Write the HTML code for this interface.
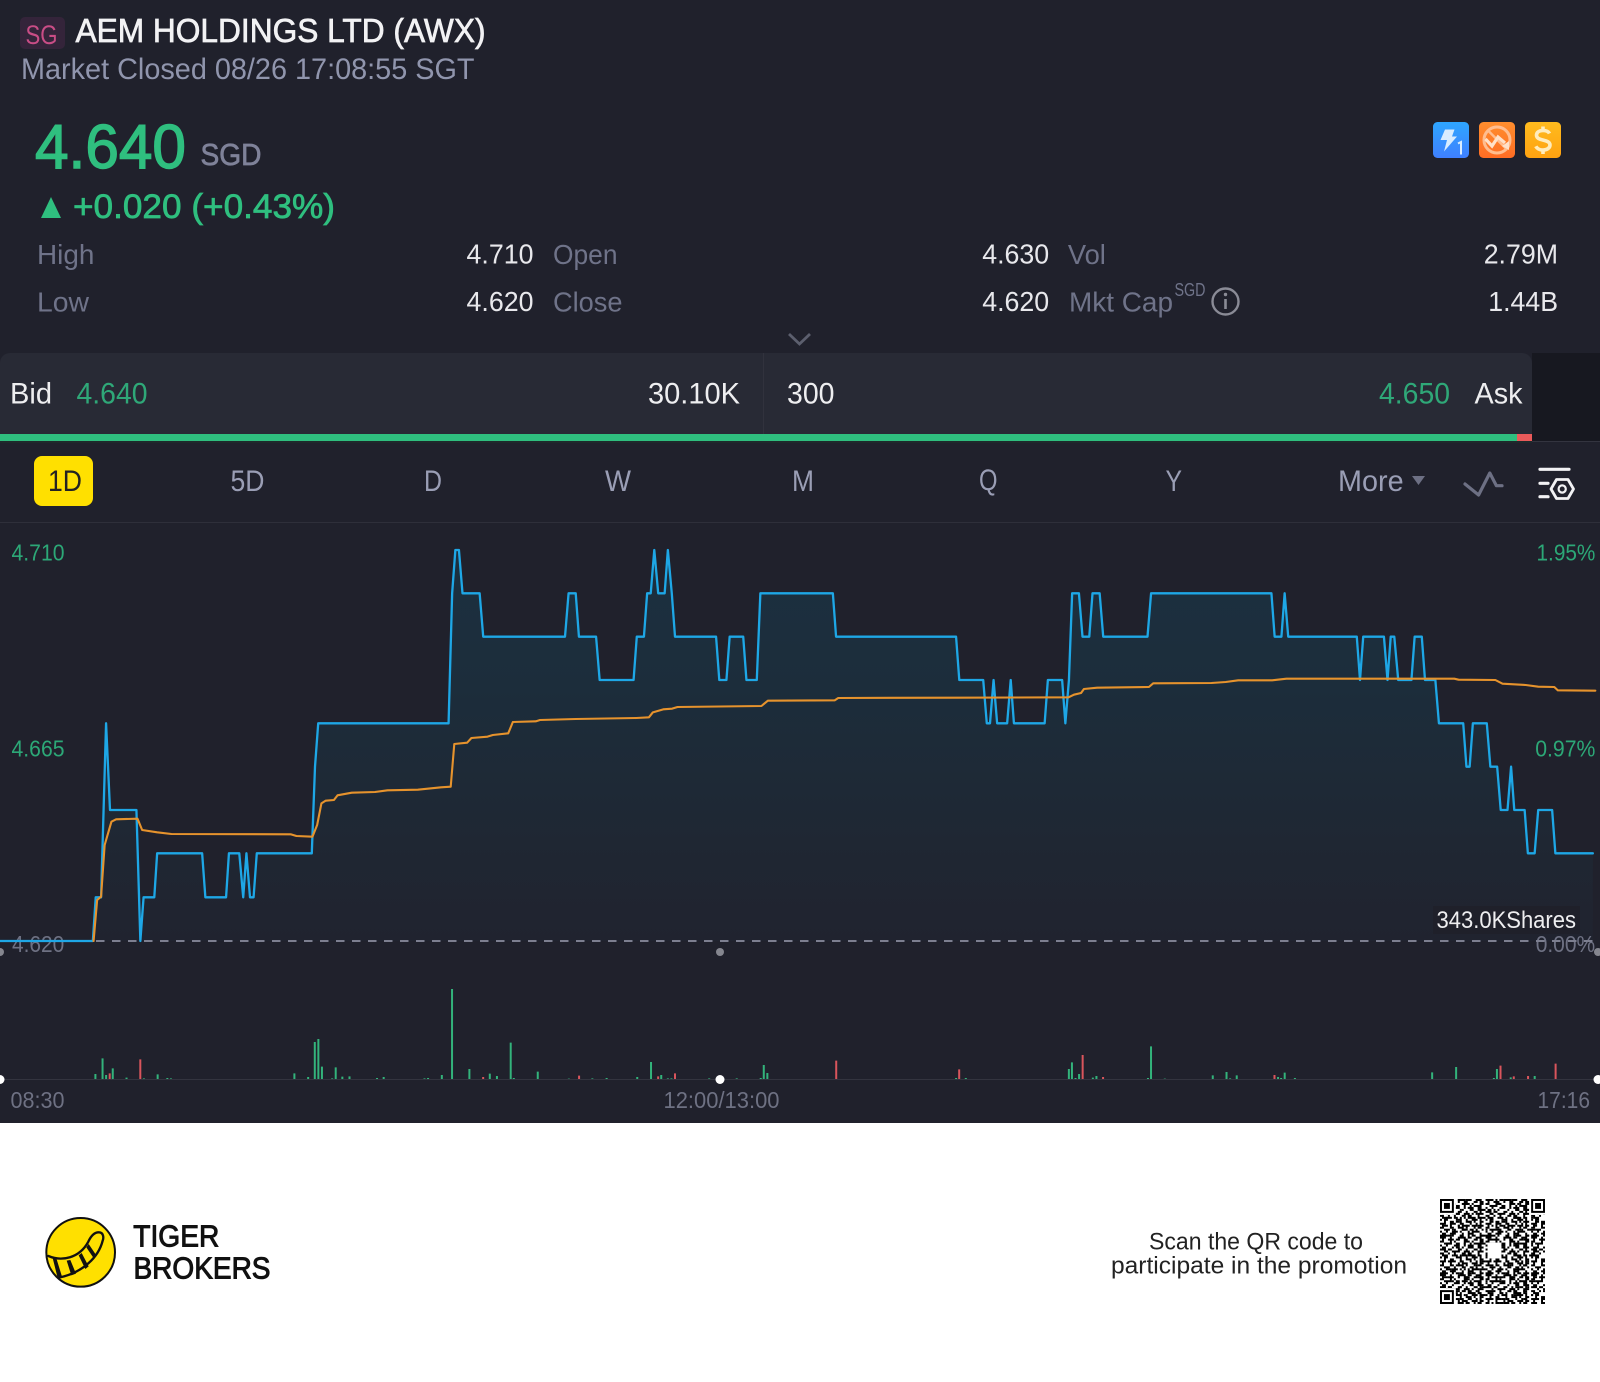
<!DOCTYPE html>
<html><head><meta charset="utf-8"><title>AEM HOLDINGS LTD (AWX)</title>
<style>
html,body{margin:0;padding:0;background:#fff;width:1600px;height:1382px;overflow:hidden}
svg{display:block}
text{font-family:"Liberation Sans",sans-serif;white-space:pre}
.lab{font-size:28px;fill:#6f7389}
.val{font-size:28px;fill:#e8e8ec}
.bid{font-size:30px;fill:#eeeef0}
.bg{font-size:30px;fill:#2fa878}
.tab{font-size:30px;fill:#9a9eb5}
.ax{font-size:23.5px;fill:#6e7183}
.axg{font-size:23.5px;fill:#2ca877}
.ln{vector-effect:non-scaling-stroke;fill:none;stroke-linejoin:round;stroke-linecap:round}
.bar{vector-effect:non-scaling-stroke;fill:none;stroke-width:2}
</style></head><body>
<svg width="1600" height="1382" viewBox="0 0 1600 1382" xmlns="http://www.w3.org/2000/svg">
<defs>
<linearGradient id="af" x1="0" y1="0" x2="0" y2="1"><stop offset="0" stop-color="#1b3040"/><stop offset=".35" stop-color="#1c2d3b"/><stop offset=".75" stop-color="#1f2733"/><stop offset="1" stop-color="#20232f"/></linearGradient>
<linearGradient id="b1" x1="0" y1="0" x2="0" y2="1"><stop offset="0" stop-color="#2ea6ff"/><stop offset="1" stop-color="#3f80ff"/></linearGradient>
<linearGradient id="b2" x1="0" y1="0" x2="0" y2="1"><stop offset="0" stop-color="#ff8e2e"/><stop offset="1" stop-color="#ff6d24"/></linearGradient>
<linearGradient id="b3" x1="0" y1="0" x2="0" y2="1"><stop offset="0" stop-color="#ffbb1e"/><stop offset="1" stop-color="#ffa211"/></linearGradient>
<pattern id="qr1" patternUnits="userSpaceOnUse" width="23" height="19">
<path fill="none" stroke="#000" stroke-width="1" d="M0 .5h3m2 0h1m3 0h4m1 0h2m2 0h3M1 1.5h1m2 0h3m2 0h1m2 0h2m3 0h2m1 0h2M0 2.5h2m3 0h1m1 0h1m4 0h3m1 0h1m3 0h2M2 3.5h4m2 0h2m2 0h1m2 0h1m1 0h4M0 4.5h1m2 0h1m3 0h3m2 0h1m1 0h3m2 0h2M1 5.5h2m3 0h1m4 0h1m3 0h2m2 0h3M0 6.5h3m1 0h2m3 0h2m2 0h1m3 0h2m1 0h1M3 7.5h1m2 0h4m2 0h3m1 0h1m2 0h3M0 8.5h2m2 0h1m2 0h1m3 0h2m1 0h2m3 0h1M1 9.5h3m3 0h2m1 0h1m3 0h4m1 0h2M0 10.5h1m1 0h2m4 0h3m2 0h1m2 0h3m1 0h1M2 11.5h1m2 0h2m3 0h1m2 0h3m1 0h1m2 0h2M0 12.5h3m2 0h3m2 0h2m3 0h1m2 0h1m1 0h1M1 13.5h1m3 0h1m3 0h1m1 0h3m2 0h3m1 0h2M0 14.5h2m3 0h2m2 0h3m1 0h1m3 0h1m1 0h2M2 15.5h3m2 0h1m3 0h2m2 0h2m1 0h1m2 0h1M0 16.5h1m2 0h1m2 0h3m1 0h1m3 0h1m1 0h4M1 17.5h2m2 0h3m3 0h1m2 0h3m3 0h1M0 18.5h4m2 0h1m3 0h2m2 0h1m1 0h2m2 0h2"/>
</pattern>
<pattern id="qr2" patternUnits="userSpaceOnUse" width="17" height="13">
<path fill="none" stroke="#000" stroke-width="1" d="M2 .5h2m5 0h1m3 0h2M6 2.5h1m4 0h3M4 5.5h2m4 0h1M1 7.5h1m6 0h2M3 9.5h3m6 0h1M8 11.5h2m4 0h2"/>
</pattern>
</defs>

<!-- dark app background -->
<rect x="0" y="0" width="1600" height="1123" fill="#20212c"/>
<rect x="0" y="1123" width="1600" height="259" fill="#fff"/>

<!-- header -->
<rect x="20" y="17" width="45" height="32" rx="5" fill="#34243a"/>
<text x="25.5" y="44" font-size="27" fill="#c94d86" textLength="32" lengthAdjust="spacingAndGlyphs">SG</text>
<text x="75.5" y="42" font-size="33" fill="#f2f2f4" stroke="#f2f2f4" stroke-width=".7" textLength="410" lengthAdjust="spacingAndGlyphs">AEM HOLDINGS LTD (AWX)</text>
<text x="21" y="79" font-size="30" fill="#9095ad" textLength="453.500" lengthAdjust="spacingAndGlyphs">Market Closed 08/26 17:08:55 SGT</text>

<text x="35" y="168" font-size="62" fill="#2fbf7f" stroke="#2fbf7f" stroke-width="1.400" textLength="151" lengthAdjust="spacingAndGlyphs">4.640</text>
<text x="200.500" y="165" font-size="31" fill="#7f8299" stroke="#7f8299" stroke-width=".7" textLength="61" lengthAdjust="spacingAndGlyphs">SGD</text>
<path d="M51 197L61 218H41Z" fill="#2fbf7f"/>
<text x="73" y="218" font-size="34" fill="#2fbf7f" stroke="#2fbf7f" stroke-width=".7" textLength="262" lengthAdjust="spacingAndGlyphs">+0.020 (+0.43%)</text>

<!-- badges -->
<rect x="1433" y="122" width="36" height="36" rx="4.500" fill="url(#b1)"/>
<path d="M1445 129.500h9.500l-2.500 7h5l-13 15 3-11.500h-6.500z" fill="#d8ecff"/>
<path d="M1458 143.500l3-1.500v12.500" fill="none" stroke="#d8ecff" stroke-width="2"/>
<rect x="1479" y="122" width="36" height="36" rx="4.500" fill="url(#b2)"/>
<circle cx="1497" cy="140" r="13" fill="none" stroke="#ffbd8f" stroke-width="3"/>
<path d="M1488 130.500l19 19" fill="none" stroke="#ffbd8f" stroke-width="2.500"/>
<path d="M1485.500 139l6.500 7 6-9 7 6" fill="none" stroke="#ffe0c8" stroke-width="3.200"/>
<path d="M1502 146l7-5v9z" fill="#ffe0c8"/>
<rect x="1525" y="122" width="36" height="36" rx="4.500" fill="url(#b3)"/>
<path d="M1549.500 133.500c-1-2-3-3-6.500-3-4 0-6.500 2-6.500 4.800 0 6.200 13.500 3.400 13.500 9.700 0 3-3 5-7 5-3.500 0-6-1.500-7.200-3.700M1543 126.500v4M1543 150v4" fill="none" stroke="#ffecbc" stroke-width="3.600"/>

<!-- stats -->
<text class="lab" x="37" y="264" textLength="57.400" lengthAdjust="spacingAndGlyphs">High</text>
<text class="val" x="466.500" y="263.500" textLength="67" lengthAdjust="spacingAndGlyphs">4.710</text>
<text class="lab" x="553" y="264" textLength="64.500" lengthAdjust="spacingAndGlyphs">Open</text>
<text class="val" x="982.200" y="263.500" textLength="67" lengthAdjust="spacingAndGlyphs">4.630</text>
<text class="lab" x="1067.900" y="264" textLength="38" lengthAdjust="spacingAndGlyphs">Vol</text>
<text class="val" x="1483.700" y="263.500" textLength="74.300" lengthAdjust="spacingAndGlyphs">2.79M</text>
<text class="lab" x="37" y="311.700" textLength="52" lengthAdjust="spacingAndGlyphs">Low</text>
<text class="val" x="466.500" y="311" textLength="67" lengthAdjust="spacingAndGlyphs">4.620</text>
<text class="lab" x="553" y="311.700" textLength="69.500" lengthAdjust="spacingAndGlyphs">Close</text>
<text class="val" x="982.200" y="311" textLength="67" lengthAdjust="spacingAndGlyphs">4.620</text>
<text class="lab" x="1069" y="311.700" textLength="104" lengthAdjust="spacingAndGlyphs">Mkt Cap</text>
<text x="1174.500" y="296" font-size="18" fill="#6f7389" textLength="31" lengthAdjust="spacingAndGlyphs">SGD</text>
<circle cx="1225.500" cy="301.500" r="13" fill="none" stroke="#8a8b96" stroke-width="2.400"/>
<path d="M1225.500 299v10" stroke="#8a8b96" stroke-width="2.600"/><circle cx="1225.500" cy="294.500" r="1.700" fill="#8a8b96"/>
<text class="val" x="1488.300" y="311" textLength="69.700" lengthAdjust="spacingAndGlyphs">1.44B</text>
<path d="M789 334l10.500 10 10.500-10" fill="none" stroke="#5c5f6e" stroke-width="2.800"/>

<!-- bid/ask -->
<rect x="1532" y="353" width="68" height="88" fill="#171820"/>
<path d="M0 434V363a10 10 0 0 1 10-10H1522a10 10 0 0 1 10 10V434Z" fill="#282a35"/>
<rect x="763" y="353" width="1" height="81" fill="#31323d"/>
<rect x="0" y="434" width="1517" height="7" fill="#2fbf7f"/>
<rect x="1517" y="434" width="15" height="7" fill="#ea5a5a"/>
<rect x="0" y="441" width="1532" height="2" fill="#1e2a2c"/>
<rect x="1532" y="441" width="68" height="1" fill="#33343f"/>
<text class="bid" x="10" y="403.500" textLength="42" lengthAdjust="spacingAndGlyphs">Bid</text>
<text class="bg" x="76.500" y="403.500" textLength="71" lengthAdjust="spacingAndGlyphs">4.640</text>
<text class="bid" x="648" y="403.500" textLength="92" lengthAdjust="spacingAndGlyphs">30.10K</text>
<text class="bid" x="787" y="403.500" textLength="47.500" lengthAdjust="spacingAndGlyphs">300</text>
<text class="bg" x="1379" y="403.500" textLength="71" lengthAdjust="spacingAndGlyphs">4.650</text>
<text class="bid" x="1474.500" y="403.500" textLength="48" lengthAdjust="spacingAndGlyphs">Ask</text>

<!-- tabs -->
<rect x="34" y="456" width="59" height="50" rx="8" fill="#ffe000"/>
<text x="48" y="491" font-size="30" fill="#222" textLength="34" lengthAdjust="spacingAndGlyphs">1D</text>
<text class="tab" x="230.500" y="491" textLength="34" lengthAdjust="spacingAndGlyphs">5D</text>
<text class="tab" x="424" y="491" textLength="18" lengthAdjust="spacingAndGlyphs">D</text>
<text class="tab" x="605" y="491" textLength="26" lengthAdjust="spacingAndGlyphs">W</text>
<text class="tab" x="792" y="491" textLength="22" lengthAdjust="spacingAndGlyphs">M</text>
<text class="tab" x="979" y="490" textLength="18.500" lengthAdjust="spacingAndGlyphs">Q</text>
<text class="tab" x="1165.500" y="491" textLength="16.500" lengthAdjust="spacingAndGlyphs">Y</text>
<text class="tab" x="1338" y="491" textLength="65.600" lengthAdjust="spacingAndGlyphs">More</text>
<path d="M1412 476h13l-6.500 9z" fill="#6d7084"/>
<path d="M1465 484L1478.600 495L1489.800 473L1496.400 485.700H1502" fill="none" stroke="#6d7084" stroke-width="3.200" stroke-linejoin="round" stroke-linecap="round"/>
<path d="M1540 469.300H1569M1540 483.300H1548M1540 496.700H1548" stroke="#f2f2f4" stroke-width="3.200" stroke-linecap="round" fill="none"/>
<path d="M1556.500 479.500H1568L1573.500 489L1568 498.500H1556.500L1551 489Z" fill="none" stroke="#f2f2f4" stroke-width="2.800" stroke-linejoin="round"/>
<circle cx="1562.200" cy="489" r="3.600" fill="none" stroke="#f2f2f4" stroke-width="2.200"/>
<rect x="0" y="522" width="1600" height="1" fill="#2e2f3a"/>

<!-- chart -->
<text class="ax" x="12" y="952" textLength="52.300" lengthAdjust="spacingAndGlyphs">4.620</text>
<g transform="translate(0,530) scale(.357143,.333333)">
<path fill="url(#af)" d="M260 1233L268 1102H283L297 580L308 840H382L393 1233L402 1102H432L440 970H566L575 1102H633L641 970H670L681 1102L690 970L700 1102H710L719 970H873L882 710L891 580H1256L1266 190L1275 60H1285L1295 190H1343L1353 320H1582L1592 190H1612L1621 320H1669L1679 450H1774L1783 320H1803L1812 190H1822L1832 60L1843 190H1861L1870 60L1881 190L1890 320H2005L2014 450H2034L2043 320H2081L2090 450H2119L2129 190H2332L2341 320H2677L2686 450H2753L2763 580H2772L2782 450L2792 580H2820L2830 450L2839 580H2925L2934 450H2974L2983 580L2993 450L3002 190H3021L3031 320H3050L3059 190H3079L3089 320H3213L3223 190H3560L3569 320H3588L3597 190L3607 320H3799L3808 450L3817 320H3875L3885 450L3894 320H3904L3915 450H3952L3961 320H3981L3990 450H4019L4029 580H4097L4106 710H4115L4124 580H4163L4173 710H4192L4202 840H4221L4231 710L4240 840H4269L4278 970H4297L4307 840H4346L4355 970H4460V1233Z"/>
</g>
<rect x="1433" y="906" width="147" height="28" fill="#1f202a"/>
<text class="ax" x="1535.700" y="952" textLength="59.500" lengthAdjust="spacingAndGlyphs">0.00%</text>
<path d="M96 941H1600" stroke="#7d7f90" stroke-width="2" stroke-dasharray="8.500 7.500" fill="none"/>
<g transform="translate(0,530) scale(.357143,.333333)">
<path class="ln" stroke="#1ea7e6" stroke-width="2.300" d="M0 1233H260L268 1102H283L297 580L308 840H382L393 1233L402 1102H432L440 970H566L575 1102H633L641 970H670L681 1102L690 970L700 1102H710L719 970H873L882 710L891 580H1256L1266 190L1275 60H1285L1295 190H1343L1353 320H1582L1592 190H1612L1621 320H1669L1679 450H1774L1783 320H1803L1812 190H1822L1832 60L1843 190H1861L1870 60L1881 190L1890 320H2005L2014 450H2034L2043 320H2081L2090 450H2119L2129 190H2332L2341 320H2677L2686 450H2753L2763 580H2772L2782 450L2792 580H2820L2830 450L2839 580H2925L2934 450H2974L2983 580L2993 450L3002 190H3021L3031 320H3050L3059 190H3079L3089 320H3213L3223 190H3560L3569 320H3588L3597 190L3607 320H3799L3808 450L3817 320H3875L3885 450L3894 320H3904L3915 450H3952L3961 320H3981L3990 450H4019L4029 580H4097L4106 710H4115L4124 580H4163L4173 710H4192L4202 840H4221L4231 710L4240 840H4269L4278 970H4297L4307 840H4346L4355 970H4460"/>
<path class="ln" stroke="#e6932d" stroke-width="2.100" d="M262 1233L272 1110L283 1100L293 945L312 875L325 868L385 866L398 900L440 907L480 912L815 913L830 918L875 920L888 885L900 820L912 812L935 810L945 796L985 788L1050 786L1085 781L1170 779L1235 772L1262 770L1272 642L1308 638L1320 624L1365 620L1380 615L1423 610L1436 576L1500 574L1512 570L1612 567L1782 564L1817 562L1828 547L1857 538L1882 536L1897 531L2132 528L2150 512L2337 511L2347 504L2682 503L2992 502L3007 494L3027 489L3035 477L3072 473L3217 471L3229 460L3392 459L3432 456L3467 451L3562 451L3602 446L4072 446L4084 449L4187 450L4207 461L4272 465L4307 470L4352 471L4362 481L4467 482"/>
</g>
<text class="axg" x="11.500" y="560.700" textLength="53" lengthAdjust="spacingAndGlyphs">4.710</text>
<text class="axg" x="11.500" y="756.700" textLength="53" lengthAdjust="spacingAndGlyphs">4.665</text>
<text class="axg" x="1536.500" y="560.700" textLength="58.900" lengthAdjust="spacingAndGlyphs">1.95%</text>
<text class="axg" x="1535.200" y="756.700" textLength="60.200" lengthAdjust="spacingAndGlyphs">0.97%</text>
<text x="1436.500" y="928" font-size="24" fill="#eeeef0" textLength="139.500" lengthAdjust="spacingAndGlyphs">343.0KShares</text>
<circle cx="0" cy="952" r="4" fill="#85868f"/><circle cx="720" cy="952" r="4" fill="#85868f"/><circle cx="1598" cy="952" r="4" fill="#85868f"/>

<!-- volume -->
<rect x="0" y="1079" width="1600" height="1" fill="#33343f"/>
<g transform="translate(0,930) scale(.510204,.333333)">
<path class="bar" stroke="#33b37b" d="M187 432V447M201 385V447M208 435V447M221 415V447M248 443V447M282 445V447M309 433V447M328 444V447M335 445V447M577 430V447M604 441V447M617 336V447M624 327V447M631 410V447M651 445V447M658 412V447M671 440V447M685 439V447M739 444V447M752 441V447M832 445V447M839 444V447M866 435V447M886 177V447M920 417V447M960 431V447M974 438V447M1001 338V447M1007 444V447M1054 425V447M1115 446V447M1161 445V447M1189 444V447M1249 441V447M1276 396V447M1296 435V447M1309 445V447M1316 445V447M1390 445V447M1444 445V447M1491 444V447M1497 405V447M1504 429V447"/>
<path class="bar" stroke="#d9555c" d="M215 430V447M275 388V447M947 441V447M1135 437V447M1290 439V447M1323 430V447"/>
</g>
<g transform="translate(800,930) scale(.510204,.333333)">
<path class="bar" stroke="#33b37b" d="M306 444V447M325 444V447M527 417V447M533 397V447M540 444V447M547 432V447M574 443V447M581 438V447M682 444V447M688 349V447M715 446V447M809 436V447M836 426V447M843 445V447M856 436V447M937 441V447M943 444V447M950 428V447M970 444V447M1239 427V447M1286 411V447M1360 444V447M1366 417V447M1393 442V447M1440 438V447"/>
<path class="bar" stroke="#d9555c" d="M71 392V447M312 418V447M554 375V447M594 441V447M930 435V447M1373 407V447M1399 439V447M1427 438V447M1481 401V447"/>
</g>
<circle cx="0" cy="1079.500" r="4.500" fill="#fff"/><circle cx="720" cy="1079.500" r="4.500" fill="#fff"/><circle cx="1598" cy="1079.500" r="4.500" fill="#fff"/>
<text class="ax" x="10.500" y="1108" textLength="54" lengthAdjust="spacingAndGlyphs">08:30</text>
<text class="ax" x="663.500" y="1108" textLength="116" lengthAdjust="spacingAndGlyphs">12:00/13:00</text>
<text class="ax" x="1537.500" y="1108" textLength="52.500" lengthAdjust="spacingAndGlyphs">17:16</text>

<!-- footer logo -->
<g transform="translate(20,1190) scale(.333333)">
<circle cx="182" cy="187" r="103" fill="#ffe000" stroke="#111" stroke-width="6"/>
<path d="M85 198C125 215 178 205 205 155C212 140 222 127 236 127C252 127 251 145 248 152C236 200 190 248 116 263" fill="none" stroke="#111" stroke-width="7" stroke-linecap="round"/>
<path d="M98 204L110 208L126 260L112 260ZM140 212L151 210L168 251L154 256ZM176 196L185 189L206 229L196 237ZM199 172L206 162L229 196L222 206Z" fill="#111"/>
</g>
<text x="133.300" y="1246.700" font-size="31" fill="#111" stroke="#111" stroke-width="1" textLength="86" lengthAdjust="spacingAndGlyphs">TIGER</text>
<text x="133.500" y="1278.300" font-size="31" fill="#111" stroke="#111" stroke-width="1" textLength="137" lengthAdjust="spacingAndGlyphs">BROKERS</text>

<!-- footer text -->
<text x="1149" y="1249.500" font-size="24" fill="#222" textLength="214" lengthAdjust="spacingAndGlyphs">Scan the QR code to</text>
<text x="1111" y="1273.500" font-size="24" fill="#222" textLength="296" lengthAdjust="spacingAndGlyphs">participate in the promotion</text>

<!-- QR -->
<g transform="translate(1440,1199) scale(1.981,1.981)">
<rect width="53" height="53" fill="url(#qr1)"/>
<rect width="53" height="53" fill="url(#qr2)"/>
<rect x="24" y="22" width="7" height="8" fill="#fff"/>
<rect x="0" y="0" width="8" height="8" fill="#fff"/>
<rect x=".5" y=".5" width="6" height="6" fill="#fff" stroke="#000"/>
<rect x="2" y="2" width="3" height="3"/>
<rect x="45" y="0" width="8" height="8" fill="#fff"/>
<rect x="46.500" y=".5" width="6" height="6" fill="#fff" stroke="#000"/>
<rect x="48" y="2" width="3" height="3"/>
<rect x="0" y="45" width="8" height="8" fill="#fff"/>
<rect x=".5" y="46.500" width="6" height="6" fill="#fff" stroke="#000"/>
<rect x="2" y="48" width="3" height="3"/>
</g>
</svg>
</body></html>
